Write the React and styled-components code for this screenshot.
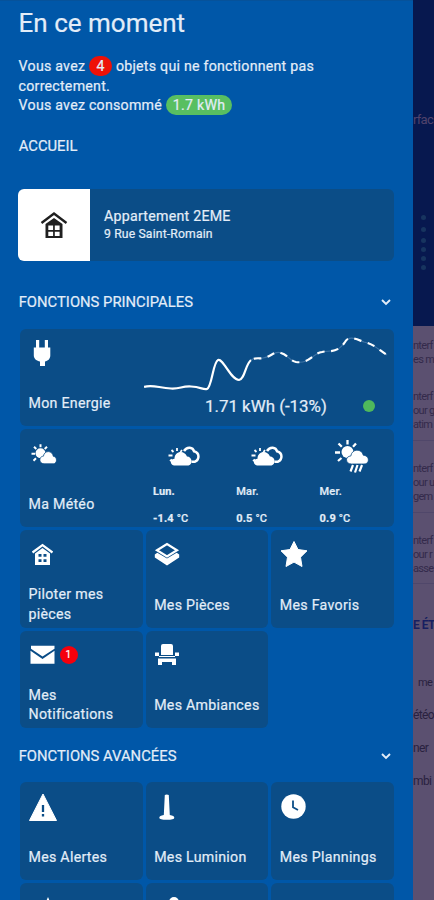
import styled, { createGlobalStyle } from "styled-components"

const GlobalStyle = createGlobalStyle`
  * {
    box-sizing: border-box;
  }
  body {
    margin: 0;
    font-family: Roboto, "Liberation Sans", sans-serif;
    color: #e3edf8;
    background: #0057a8;
  }
  svg {
    display: block;
  }
`

const Screen = styled.div`
  display: flex;
  width: 434px;
  height: 900px;
  overflow: hidden;
`

const Drawer = styled.aside`
  width: 413px;
  flex: none;
  padding: 8px 18px 0;
  background: #0057a8;
  border-top: 1px solid #06529a;
  -webkit-text-stroke: 0.2px currentColor;
`

const Title = styled.h1`
  margin: 0;
  padding-left: 0.6px;
  font-size: 26px;
  font-weight: 400;
  line-height: 28px;
`

const Summary = styled.div`
  margin-top: 20px;
  padding-left: 0.6px;
  font-size: 14.2px;
  line-height: 19.5px;
  letter-spacing: 0.24px;
`

const Pill = styled.span`
  display: inline-block;
  height: 20px;
  line-height: 20px;
  margin: -1px 0;
  padding: 0 ${(p) => p.$pad}px;
  border-radius: 12px;
  background: ${(p) => p.$color};
`

const SectionHead = styled.div`
  display: flex;
  align-items: center;
  justify-content: space-between;
  height: 20px;
  margin-top: ${(p) => p.$top}px;
  padding: 0 3px 0 0.7px;
  font-size: 14.8px;
`

const HomeCard = styled.div`
  display: flex;
  height: 72px;
  width: 376px;
  margin-top: 33px;
  border-radius: 6px;
  overflow: hidden;
  background: #0b4d87;
`

const HomeIcon = styled.div`
  display: flex;
  align-items: center;
  justify-content: center;
  width: 72px;
  color: #202020;
  background: #fff;
`

const HomeText = styled.div`
  padding: 18px 14px;
  font-size: 14.2px;
  line-height: 18px;
  letter-spacing: 0.25px;
`

const Address = styled.div`
  font-size: 12.2px;
  letter-spacing: 0.15px;
`

const Grid = styled.div`
  display: grid;
  grid-template-columns: repeat(3, 1fr);
  grid-auto-rows: 97.7px;
  gap: 3px;
  width: 374px;
  margin: ${(p) => p.$top}px 0 0 2px;
`

const Tile = styled.div`
  display: flex;
  justify-content: space-between;
  grid-column: span ${(p) => p.$span || 1};
  border-radius: 6px;
  background: #0b4d87;
  overflow: hidden;
`

const TileMain = styled.div`
  display: flex;
  flex-direction: column;
  justify-content: space-between;
  padding: 10.5px 0 ${(p) => (p.$tall ? 3.3 : 12.3)}px 8.5px;
  font-size: 14.2px;
  line-height: 19.5px;
  letter-spacing: 0.28px;
`

const IconRow = styled.div`
  display: flex;
  align-items: center;
  gap: 4px;
  height: 28px;
  color: #fff;
`

const Count = styled.span`
  width: 18px;
  height: 18px;
  border-radius: 50%;
  background: #f5000c;
  font-size: 10px;
  line-height: 18px;
  text-align: center;
`

const Energy = styled.div`
  width: 250px;
  padding-top: 4px;
`

const EnergyValue = styled.div`
  display: flex;
  align-items: center;
  justify-content: space-between;
  height: 20px;
  margin-top: 3px;
  padding: 0 19px 0 61px;
  font-size: 16.9px;
`

const Status = styled.span`
  width: 12px;
  height: 12px;
  border-radius: 50%;
  background: #4fb85c;
`

const Forecast = styled.div`
  display: grid;
  grid-template-columns: repeat(3, 83.3px);
  width: 241px;
`

const Day = styled.div`
  padding-top: 8px;
  font-size: 11px;
  line-height: 14px;
  letter-spacing: 0.15px;
  font-weight: ${(p) => (p.$today ? 700 : 500)};
`

const DayIcon = styled.div`
  display: flex;
  align-items: center;
  height: 38px;
  padding-left: 14px;
  margin-bottom: 10px;
  color: #fff;
`

const Temp = styled.div`
  margin-top: 13px;
  font-weight: 700;
  span {
    font-weight: 500;
  }
`

const Behind = styled.div`
  width: 21px;
  flex: none;
  overflow: hidden;
  white-space: nowrap;
  background: #5b5070;
`

const BehindHeader = styled.div`
  height: 326px;
  padding-top: 110px;
  background: #07184f;
  color: #51436c;
  font-size: 13px;
  line-height: 20px;
  letter-spacing: -0.7px;
`

const Dots = styled.div`
  display: flex;
  flex-direction: column;
  align-items: center;
  padding-top: 85px;
`

const Dot = styled.i`
  width: 5px;
  height: 5px;
  margin-bottom: ${(p) => p.$gap}px;
  border-radius: 50%;
  background: #17345f;
`

const BehindItem = styled.div`
  height: ${(p) => p.$height}px;
  padding-top: ${(p) => p.$top}px;
  border-bottom: ${(p) => (p.$line ? "1px solid #50476a" : "none")};
  color: #332a4b;
  font-size: 11px;
  line-height: 14px;
  letter-spacing: -0.7px;
`

const BehindTitle = styled.div`
  height: 75px;
  padding-top: 31px;
  color: #171f61;
  font-size: 12px;
  font-weight: 700;
  line-height: 20px;
  letter-spacing: -0.5px;
`

const BehindLink = styled.div`
  height: 32.7px;
  padding-left: ${(p) => p.$left || 0}px;
  color: #29213f;
  font-size: ${(p) => (p.$left ? 11 : 12)}px;
  line-height: 32px;
  letter-spacing: -0.6px;
`

const BehindLinks = styled.div`
  padding-top: 8px;
`

const House = ({ size }) => (
  <svg width={size} height={size} viewBox="0 0 28 28" fill="none" stroke="currentColor">
    <path d="M1.500 12 14 2.500 26.500 12" strokeWidth="2.400" />
    <path
      d="M5.500 13 14 7l8.500 6V27h-17zM8.300 14.500v4.500h4.800v-4.500zm6.500 0v4.500h4.800v-4.500zM8.300 20.700V25h4.800v-4.300zm6.500 0V25h4.800v-4.300z"
      fill="currentColor"
      fillRule="evenodd"
      stroke="none"
    />
  </svg>
)

const SmallHouse = () => (
  <svg width="25" height="24" viewBox="0 0 25 24" fill="none" stroke="currentColor">
    <path d="M3.500 10.500 13.500 3l10 7.500" strokeWidth="2.200" />
    <path
      d="M6 11.500 13.500 6l7.500 5.500V23H6zM9.500 12v2.800h3V12zm5 0v2.800h3V12zM9.500 17.200V20h3v-2.800zm5 0V20h3v-2.800z"
      fill="currentColor"
      fillRule="evenodd"
      stroke="none"
    />
  </svg>
)

const Plug = () => (
  <svg width="26" height="28" viewBox="0 0 26 28" fill="currentColor">
    <path d="M7 1h3.200v7.500h5.600V1H19v7.500h2.300v8c0 3.500-2.500 5.500-5.300 6v4.500h-5v-4.500c-3-.5-6.200-2.500-6.200-6v-8H7z" />
  </svg>
)

const SunCloud = () => (
  <svg width="28" height="26" viewBox="0 0 28 26" fill="currentColor">
    <g transform="translate(1 1.300)">
      <circle cx="10.500" cy="11" r="5" />
      <path
        d="M10.500 2v3M4 4.500l2.300 2.200M1.500 11.500h3.500M3.500 18.500l2.500-2.500M17 4.500l-2.300 2.200"
        stroke="currentColor"
        strokeWidth="2"
      />
      <path
        d="M14 21.500c-5.500-.3-5.300-7.500-.6-7.600 1-6.300 9-6 9.900.1 4.500.5 4 7.500 0 7.500z"
        stroke="#0b4d87"
        strokeWidth="0.800"
      />
    </g>
  </svg>
)

const CloudsIcon = () => (
  <svg width="35" height="26" viewBox="0 0 35 26">
    <path
      d="M17 8c3-5 9-4 10 .2 6 1.500 5.500 8.500 1 10.500h-3.500"
      fill="none"
      stroke="currentColor"
      strokeWidth="2.500"
    />
    <path d="M10 5v3M4.500 7l2 2M1.500 12.500h4M3 18l2-1.500M15 7l-1.500 2" stroke="currentColor" strokeWidth="1.800" />
    <path
      d="M7 22.500c-4.500-1-4-6.500.5-6.800 0-8 10-9.200 12.500-2.200 5 0 6.500 7.500 1.500 9z"
      fill="currentColor"
    />
  </svg>
)

const RainIcon = () => (
  <svg width="35" height="36" viewBox="0 0 35 36" fill="currentColor">
    <circle cx="13.500" cy="14" r="6" />
    <path
      d="M13.500 2v4.500M4.500 5.500l3.300 3.300M1 14.500h5M4 23l3.500-3M22 5.500l-3 3.300"
      stroke="currentColor"
      strokeWidth="2.300"
    />
    <path
      d="M17.500 26c-6.500 0-6.500-7.800-.7-8 1-7.500 11-7.800 12.500-.8 6.500.3 6.700 8.800.7 8.800z"
      stroke="#0b4d87"
      strokeWidth="0.800"
    />
    <path d="m19 27-2.500 6.500M23.500 27 21 34.500M28 27l-2.500 6.500" stroke="currentColor" strokeWidth="2.200" />
  </svg>
)

const Layers = () => (
  <svg width="26" height="26" viewBox="0 0 26 26">
    <path d="M3 9.300 13 3l10 6.300-10 6.200z" fill="none" stroke="currentColor" strokeWidth="2.200" />
    <path d="M.8 13.500 3.300 11.800 13 17.500l9.700-5.700 2.500 1.700v3L13 24.500.8 16.500z" fill="currentColor" />
  </svg>
)

const Star = () => (
  <svg width="28" height="28" viewBox="0 0 28 28">
    <path
      d="m14 1.500 4 8 9 1.300-6.500 6.400L22 26.500l-8-4.400-8 4.400 1.500-9.300L1 10.800l9-1.300z"
      fill="currentColor"
      stroke="currentColor"
      strokeLinejoin="round"
    />
  </svg>
)

const Mail = () => (
  <svg width="27" height="20" viewBox="0 0 27 20">
    <path d="M2 .8h23.500v3L13.500 11.500 2 3.800zm-.5 5L13.500 14l12-8.200v13h-24z" fill="currentColor" />
  </svg>
)

const Chair = () => (
  <svg width="26" height="24" viewBox="0 0 26 24" fill="currentColor">
    <path d="M9 1h8q2 0 2 2v9H7V3q0-2 2-2zM1 9.500h4V13h16V9.500h4V13h-4v1H5v-1H1zM4 15.500h18V22h-4v-3H8v3H4z" />
  </svg>
)

const Alert = () => (
  <svg width="28" height="28" viewBox="0 0 28 28">
    <path d="M14 1 27.500 27.500H.5z" fill="currentColor" stroke="currentColor" strokeLinejoin="round" />
    <path d="M14 12v7M14 21v2.500" stroke="#0b4d87" strokeWidth="2.300" />
  </svg>
)

const Lamp = () => (
  <svg width="26" height="28" viewBox="0 0 26 28" fill="currentColor">
    <path d="M10.800 2q2-1 4 0l1 20q4.500.7 4.500 2.800 0 2-7.500 2t-7.500-2q0-2.100 4.500-2.800z" />
  </svg>
)

const Clock = () => (
  <svg width="27" height="27" viewBox="0 0 27 27">
    <circle cx="13.500" cy="13.500" r="12.200" fill="currentColor" />
    <path d="M13 7.500v6.800l5 2.700" fill="none" stroke="#0b4d87" strokeWidth="1.800" />
  </svg>
)

const Chevron = () => (
  <svg width="12" height="12" viewBox="0 0 12 12">
    <path d="m2 4 4 4 4-4" fill="none" stroke="currentColor" strokeWidth="1.900" />
  </svg>
)

const forecastPath =
  "M107 27C112 24 116 26 119 25C127 24 131 17 137 20C144 22 146 28 152 29C166 31 169 20 178 19C185 17 193 21 201 9C205 2 212 6 220 9C230 11 235 17 243 22"

const EnergyChart = () => (
  <svg width="250" height="60" viewBox="0 0 250 60" fill="none">
    <path
      d="M0 54C8 51 15 55 27 55.500C37 56 37 53 47 53.500C57 54 59 57 63 56C68 54 69 29 74 27C79 25 87 47 95 47C101 46 101 32 107 27"
      stroke="#fff"
      strokeWidth="2.200"
    />
    <path d={forecastPath} stroke="#3f74a6" strokeWidth="1.200" />
    <path
      d={forecastPath}
      stroke="#fff"
      strokeWidth="2.200"
      strokeDasharray="7.500 6.500"
      strokeDashoffset="11"
    />
  </svg>
)

const days = [
  { name: "Lun.", temp: "-1.4", icon: <CloudsIcon /> },
  { name: "Mar.", temp: "0.5", icon: <CloudsIcon /> },
  { name: "Mer.", temp: "0.9", icon: <RainIcon /> },
]

const mainTiles = [
  { label: ["Piloter mes", "pièces"], icon: <SmallHouse /> },
  { label: ["Mes Pièces"], icon: <Layers /> },
  { label: ["Mes Favoris"], icon: <Star /> },
  { label: ["Mes", "Notifications"], icon: <Mail />, count: 1 },
  { label: ["Mes Ambiances"], icon: <Chair /> },
]

const advancedTiles = [
  { label: ["Mes Alertes"], icon: <Alert /> },
  { label: ["Mes Luminion"], icon: <Lamp /> },
  { label: ["Mes Plannings"], icon: <Clock /> },
]

const FunctionTile = ({ label, icon, count }) => (
  <Tile>
    <TileMain $tall={label.length > 1}>
      <IconRow>
        {icon}
        {count && <Count>{count}</Count>}
      </IconRow>
      <div>
        {label.map((line) => (
          <div key={line}>{line}</div>
        ))}
      </div>
    </TileMain>
  </Tile>
)

const PeekTile = styled(Tile)`
  padding: 14px 0 0 22px;
  justify-content: flex-start;
  color: #fff;
`

const App = () => {
  return (
    <Screen>
      <GlobalStyle />
      <Drawer>
        <Title>En ce moment</Title>
        <Summary>
          <div>
            Vous avez{" "}
            <Pill $color="#ee1108" $pad={7.5}>
              4
            </Pill>{" "}
            objets qui ne fonctionnent pas
          </div>
          <div>correctement.</div>
          <div>
            Vous avez consommé{" "}
            <Pill $color="#58bf61" $pad={7}>
              1.7 kWh
            </Pill>
          </div>
        </Summary>
        <SectionHead $top={20.5}>ACCUEIL</SectionHead>
        <HomeCard>
          <HomeIcon>
            <House size={28} />
          </HomeIcon>
          <HomeText>
            Appartement 2EME
            <Address>9 Rue Saint-Romain</Address>
          </HomeText>
        </HomeCard>

        <SectionHead $top={30.5}>
          FONCTIONS PRINCIPALES
          <Chevron />
        </SectionHead>
        <Grid $top={17}>
          <Tile $span={3}>
            <TileMain>
              <IconRow>
                <Plug />
              </IconRow>
              Mon Energie
            </TileMain>
            <Energy>
              <EnergyChart />
              <EnergyValue>
                1.71 kWh (-13%)
                <Status />
              </EnergyValue>
            </Energy>
          </Tile>
          <Tile $span={3}>
            <TileMain>
              <IconRow>
                <SunCloud />
              </IconRow>
              Ma Météo
            </TileMain>
            <Forecast>
              {days.map((day, i) => (
                <Day key={day.name} $today={i === 0}>
                  <DayIcon>{day.icon}</DayIcon>
                  {day.name}
                  <Temp>
                    {day.temp} <span>°C</span>
                  </Temp>
                </Day>
              ))}
            </Forecast>
          </Tile>
          {mainTiles.map((tile) => (
            <FunctionTile key={tile.label[0]} {...tile} />
          ))}
        </Grid>

        <SectionHead $top={17.5}>
          FONCTIONS AVANCÉES
          <Chevron />
        </SectionHead>
        <Grid $top={16.3}>
          {advancedTiles.map((tile) => (
            <FunctionTile key={tile.label[0]} {...tile} />
          ))}
          {/* Ligne suivante, coupée par le bas de l'écran */}
          <PeekTile>
            <svg width="12" height="14" viewBox="0 0 12 14">
              <path d="M6 0 12 14H0z" fill="currentColor" />
            </svg>
          </PeekTile>
          <PeekTile>
            <svg width="12" height="14" viewBox="0 0 12 14">
              <circle cx="6" cy="5" r="5" fill="currentColor" />
            </svg>
          </PeekTile>
          <PeekTile />
        </Grid>
      </Drawer>

      <Behind>
        <BehindHeader>
          rfac
          <Dots>
            {[7, 6, 4, 4, 4, 0].map((gap, i) => (
              <Dot key={i} $gap={gap} />
            ))}
          </Dots>
        </BehindHeader>
        <BehindItem $height={51} $top={13}>
          <div>nterf</div>
          <div>es m</div>
        </BehindItem>
        <BehindItem $height={64} $top={13} $line>
          <div>nterf</div>
          <div>our g</div>
          <div>atim</div>
        </BehindItem>
        <BehindItem $height={71.5} $top={21} $line>
          <div>nterf</div>
          <div>our u</div>
          <div>gem</div>
        </BehindItem>
        <BehindItem $height={71} $top={21} $line>
          <div>nterf</div>
          <div>our r</div>
          <div>asse</div>
        </BehindItem>
        <BehindTitle>E ÉT</BehindTitle>
        <BehindLinks>
          <BehindLink $left={5}>me</BehindLink>
          <BehindLink>étéo</BehindLink>
          <BehindLink>ner</BehindLink>
          <BehindLink>mbi</BehindLink>
        </BehindLinks>
      </Behind>
    </Screen>
  )
}

export default App
